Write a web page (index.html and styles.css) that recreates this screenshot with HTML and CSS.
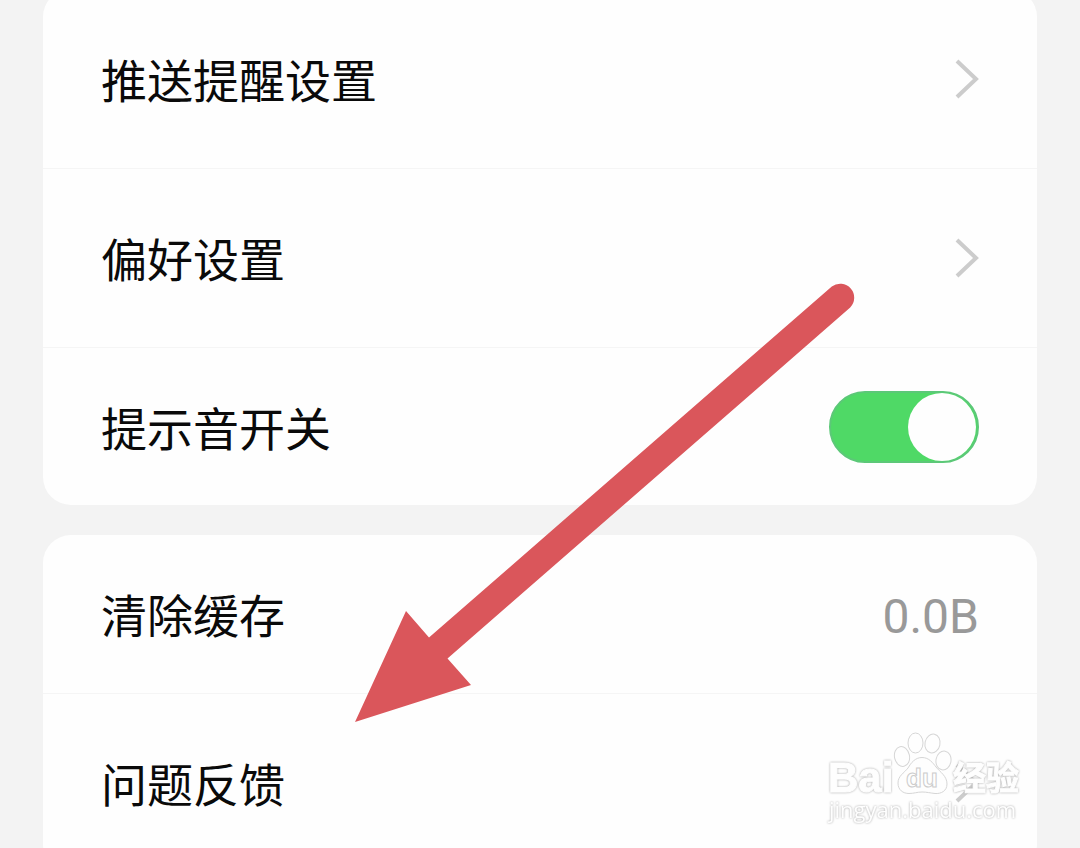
FILE: index.html
```html
<!DOCTYPE html>
<html lang="zh-CN">
<head>
<meta charset="utf-8">
<meta name="viewport" content="width=device-width, initial-scale=1">
<title>设置</title>
<link rel="stylesheet" href="styles.css">
</head>
<body>
<main class="settings">
  <section class="card">
    <a class="row row-tall" href="#push">
      <span class="label">推送提醒设置</span>
      <svg class="chevron" viewBox="0 0 24 40" aria-hidden="true"><path d="M2 2 L21 20 L2 38"/></svg>
    </a>
    <a class="row row-tall" href="#preferences">
      <span class="label">偏好设置</span>
      <svg class="chevron" viewBox="0 0 24 40" aria-hidden="true"><path d="M2 2 L21 20 L2 38"/></svg>
    </a>
    <div class="row">
      <label class="label" for="sound">提示音开关</label>
      <input class="switch" id="sound" type="checkbox" role="switch" checked>
    </div>
  </section>
  <section class="card">
    <button class="row" type="button">
      <span class="label">清除缓存</span>
      <span class="value">0.0B</span>
    </button>
    <a class="row row-tall" href="#feedback">
      <span class="label">问题反馈</span>
      <svg class="chevron" viewBox="0 0 24 40" aria-hidden="true"><path d="M2 2 L21 20 L2 38"/></svg>
    </a>
  </section>
</main>

<svg class="arrow" viewBox="355 282 500 440" aria-hidden="true">
  <path d="M355 722 L406 611 L429 637.500 L831.800 286.500 A14 14 0 0 1 850.200 307.500 L447.500 658.500 L471 685 Z"/>
</svg>

<svg class="watermark" viewBox="820 725 210 105" role="img" aria-label="Baidu 经验">
  <g class="mark">
    <text class="wm-latin" x="828" y="792">Bai</text>
    <text class="wm-cjk" x="953" y="790">经验</text>
  </g>
  <g class="paw">
    <ellipse cx="902" cy="756.500" rx="7.500" ry="10" transform="rotate(-12 902 756.500)"/>
    <ellipse cx="915.500" cy="743" rx="7.500" ry="10"/>
    <ellipse cx="932.500" cy="743.500" rx="7.500" ry="9.500" transform="rotate(12 932.500 743.500)"/>
    <ellipse cx="943.500" cy="760.500" rx="7.500" ry="9.500" transform="rotate(10 943.500 760.500)"/>
    <path d="M922 757.500 C929 757.500 933 763 936 767 C940 772 947 776 947 784 C947 791 941 794 935 793.500 C930 793 927 792 922 792 C917 792 914 793.500 909 793.500 C903 793.500 898 790 898 783 C898 776 904 773 908 768 C911 763 915 757.500 922 757.500 Z"/>
  </g>
  <text class="wm-du" x="906" y="787">du</text>
  <g class="mark mark-thin">
    <text class="wm-url" x="829" y="818">jingyan.baidu.com</text>
  </g>
</svg>
</body>
</html>
```
FILE: styles.css
```css
* {
  box-sizing: border-box;
}

body {
  position: relative;
  margin: 0;
  overflow: hidden;
  background: #f3f3f3;
  font-family: Roboto, "Noto Sans CJK SC", sans-serif;
}

.settings {
  display: flex;
  flex-direction: column;
  gap: 30px;
  margin: -11px 43px 0;
  height: calc(100vh + 11px);
}

.card {
  flex: none;
  overflow: hidden;
  border-radius: 28px;
  background: #fefefe;
}

.row {
  display: flex;
  align-items: center;
  justify-content: space-between;
  width: 100%;
  height: 158px;
  padding: 0 58px;
  border: 0;
  background: none;
  color: #0a0a0a;
  font: inherit;
  text-align: left;
  text-decoration: none;
}

.row-tall {
  height: 179px;
}

.row + .row {
  border-top: 1px solid #f5f5f5;
}

.label {
  padding-bottom: 2px;
  font-family: "Noto Sans CJK SC", sans-serif;
  font-size: 46px;
  line-height: 64px;
}

.value {
  padding-top: 6px;
  color: #999;
  font-size: 48px;
  line-height: 64px;
}

.chevron {
  width: 24px;
  height: 40px;
  fill: none;
  stroke: #ccc;
  stroke-width: 4;
}

.switch {
  display: flex;
  align-items: center;
  justify-content: flex-end;
  width: 150px;
  height: 72px;
  margin: 0;
  padding: 0 1px;
  appearance: none;
  border: 2px solid #5cc878;
  border-radius: 36px;
  background: #4fd966;
}

.switch::before {
  width: 68px;
  height: 68px;
  border-radius: 50%;
  background: #fefefe;
  content: "";
}

.arrow {
  position: absolute;
  top: 282px;
  left: 355px;
  width: 500px;
  height: 440px;
  fill: #da565b;
  pointer-events: none;
}

.watermark {
  position: absolute;
  top: 725px;
  left: 820px;
  width: 210px;
  height: 105px;
  pointer-events: none;
}

.mark {
  fill: #fefefe;
  stroke: #fefefe;
  stroke-width: 1;
  filter: drop-shadow(0 0 1px #a8a8a8);
}

.mark-thin {
  stroke: none;
}

.paw {
  fill: #fefefe;
  stroke: #d6d6d6;
  stroke-width: 1;
}

.wm-latin {
  font: bold 42px "Liberation Sans", sans-serif;
}

.wm-du {
  fill: #fefefe;
  stroke: #ccc;
  stroke-width: 1;
  font: bold 26px "Liberation Sans", sans-serif;
}

.wm-cjk {
  font: bold 33px "Noto Sans CJK SC", sans-serif;
}

.wm-url {
  font: 22px "Open Sans", sans-serif;
}
```
